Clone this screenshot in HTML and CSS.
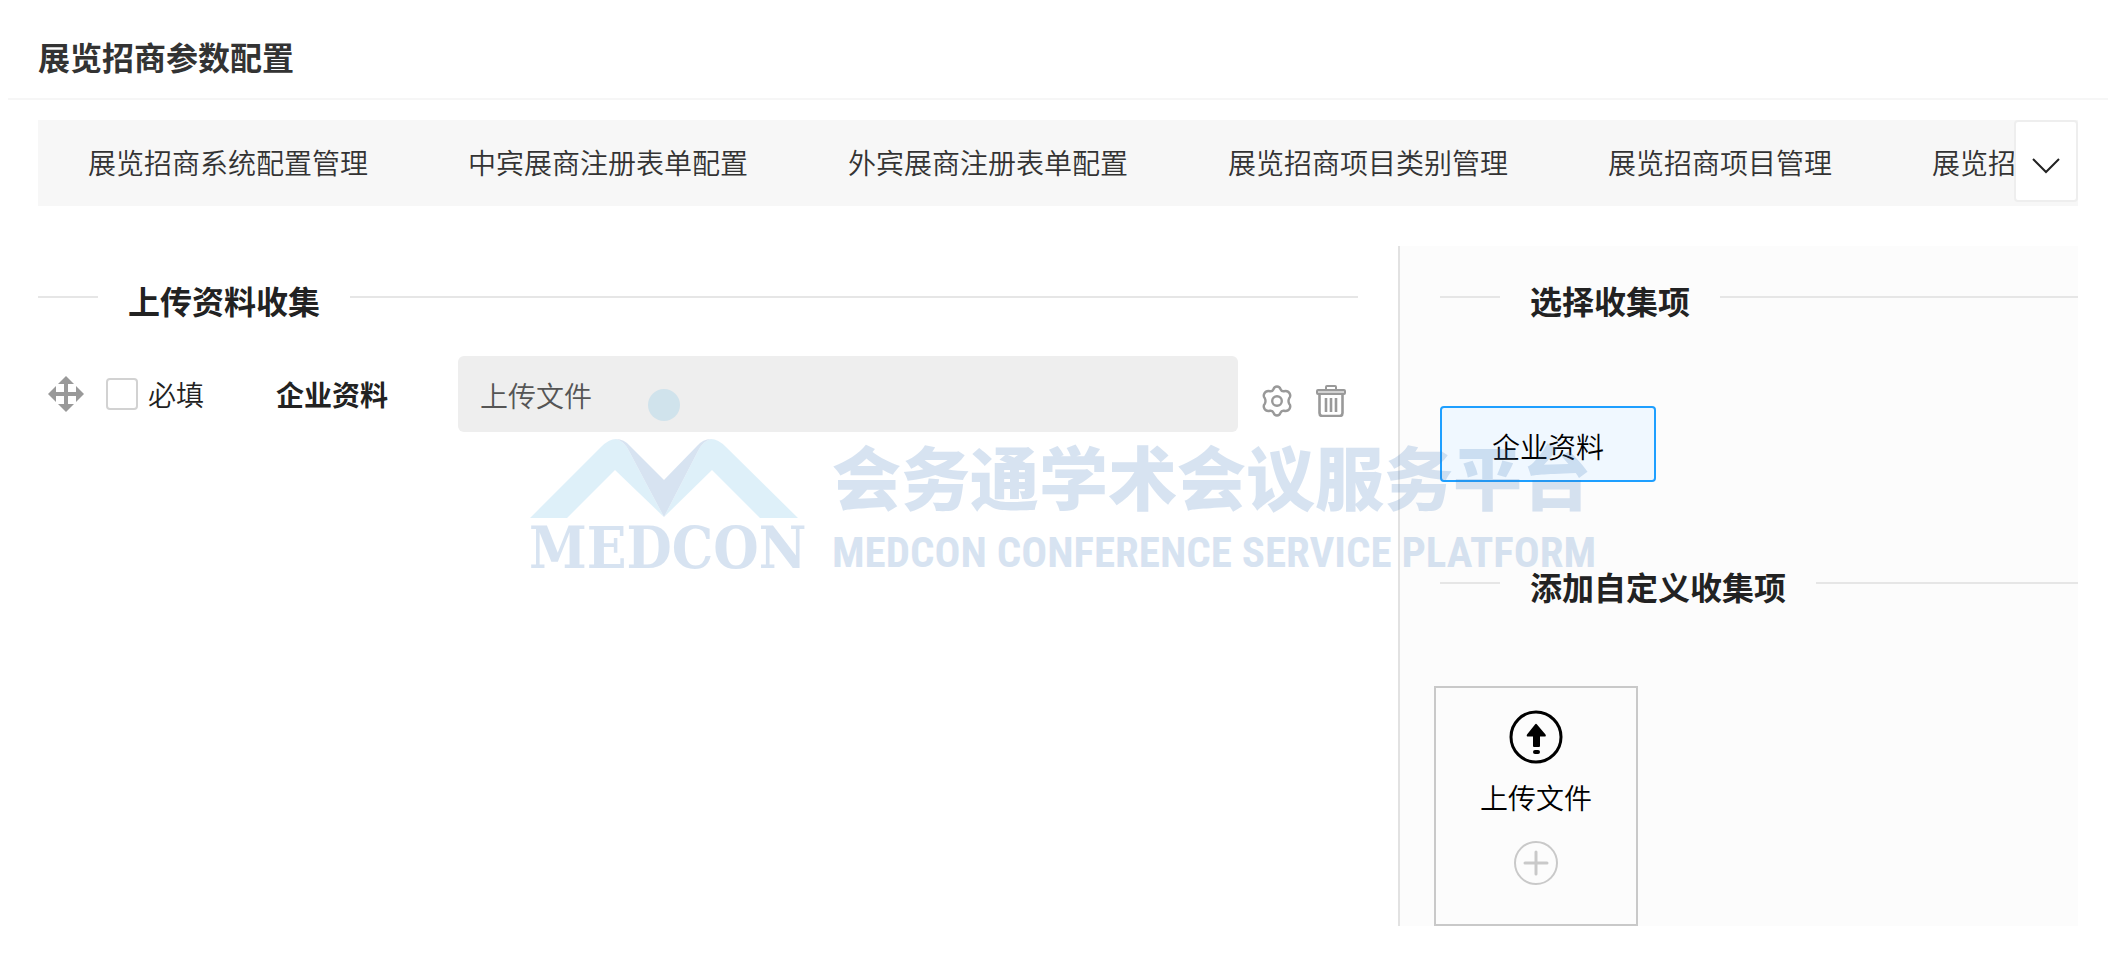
FILE: index.html
```html
<!DOCTYPE html>
<html lang="zh-CN">
<head>
    <meta charset="UTF-8">
    <meta name="viewport" content="width=device-width, initial-scale=1.0">
    <title>展览招商参数配置</title>
    <link rel="stylesheet" href="styles.css">
</head>
<body>
    <header class="page-header">
        <h1>展览招商参数配置</h1>
    </header>

    <nav class="tabs">
        <ul class="tab-list">
            <li><a href="#system">展览招商系统配置管理</a></li>
            <li><a href="#domestic">中宾展商注册表单配置</a></li>
            <li><a href="#foreign">外宾展商注册表单配置</a></li>
            <li><a href="#category">展览招商项目类别管理</a></li>
            <li><a href="#project">展览招商项目管理</a></li>
            <li><a href="#collect">展览招商资料收集</a></li>
        </ul>
        <button type="button" class="tab-more" aria-label="更多">
            <svg width="30" height="18" viewBox="0 0 30 18"><path d="M2 2l13 13L28 2" fill="none" stroke="#222" stroke-width="2"/></svg>
        </button>
    </nav>

    <main class="content">
        <section class="form-panel">
            <h2 class="field-title">上传资料收集</h2>
            <div class="form-row">
                <svg class="move-icon" width="36" height="36" viewBox="0 0 36 36" fill="#999">
                    <path d="M18 0l8 8h-6v8h8v-6l8 8-8 8v-6h-8v8h6l-8 8-8-8h6v-8H8v6l-8-8 8-8v6h8V8h-6z"/>
                </svg>
                <label class="required"><input type="checkbox">必填</label>
                <label class="item-label" for="companyFile">企业资料</label>
                <input type="text" id="companyFile" class="item-input" value="上传文件" readonly>
                <div class="actions">
                    <button type="button" aria-label="设置">
                        <svg width="30" height="32" viewBox="0 0 30 32" fill="none" stroke="#999" stroke-width="2.4">
                            <path d="M11.5 4.2Q12.2 1.5 15 1.5T18.5 4.2Q19.5 6.6 22 6.2Q26 5.4 27.6 8.4Q29 11.2 27.4 12.8Q25.600 16 27.400 19.200Q29 20.800 27.600 23.600Q26 26.600 22 25.800Q19.500 25.400 18.500 27.800Q17.800 30.500 15 30.500T11.500 27.800Q10.500 25.400 8 25.800Q4 26.600 2.400 23.600Q1 20.800 2.600 19.200Q4.400 16 2.600 12.800Q1 11.200 2.400 8.400Q4 5.400 8 6.200Q10.500 6.600 11.500 4.200Z"/>
                            <circle cx="15" cy="16" r="4.800"/>
                        </svg>
                    </button>
                    <button type="button" aria-label="删除">
                        <svg width="30" height="32" viewBox="0 0 30 32" fill="none" stroke="#999" stroke-width="2">
                            <path d="M10 5V2q0-1 1-1h8q1 0 1 1v3"/>
                            <rect x="1" y="5" width="28" height="4" rx="1" fill="#d2d2d2"/>
                            <path d="M3.500 9v19q0 3 3 3h17q3 0 3-3V9" stroke-width="2.600"/>
                            <path d="M10 13v14M15 13v14M20 13v14" stroke-width="2.600"/>
                        </svg>
                    </button>
                </div>
            </div>
        </section>

        <aside class="side-panel">
            <h2 class="field-title">选择收集项</h2>
            <button type="button" class="option">企业资料</button>
            <h2 class="field-title">添加自定义收集项</h2>
            <button type="button" class="add-card">
                <svg width="54" height="54" viewBox="0 0 54 54">
                    <circle cx="27" cy="27" r="25" fill="none" stroke="#000" stroke-width="3"/>
                    <path d="M26 14.500q1-1.500 2 0l8.500 10q1 2-1 2H31V36q0 1-1 1h-5q-1 0-1-1v-9.500h-5q-2 0-1-2z"/>
                    <rect x="24" y="40" width="7" height="4" rx="2"/>
                </svg>
                <span>上传文件</span>
                <svg width="44" height="44" viewBox="0 0 44 44" fill="none" stroke="#c9c9c9" stroke-linecap="round">
                    <circle cx="22" cy="22" r="21" stroke-width="2"/>
                    <path d="M22 11v22M11 22h22" stroke-width="3"/>
                </svg>
            </button>
        </aside>
    </main>

    <!-- watermark -->
    <svg class="watermark" width="1058" height="180" viewBox="0 0 1058 180" overflow="visible">
        <g class="mark-light">
            <circle cx="135" cy="16" r="16"/>
            <path d="M1 129L72 58Q80 50 87 50Q95 52 100 62L135 128L86 81L38 129Z"/>
            <path d="M269 129L197 58Q189 50 182 50Q174 52 169 62L135 128L183 81L231 129Z"/>
        </g>
        <g class="mark-dark">
            <path d="M87 50Q95 50 101 57L135 91L168 57Q174 50 182 50Q174 52 169 62L135 128L100 62Q95 52 87 50Z"/>
            <text class="mark-brand" x="0" y="179">MEDCON</text>
            <text class="mark-cn" x="303" y="116">会务通学术会议服务平台</text>
            <text class="mark-en" x="303" y="178">MEDCON CONFERENCE SERVICE PLATFORM</text>
        </g>
    </svg>
</body>
</html>
```

FILE: styles.css
```css
* {
    box-sizing: border-box;
}
body {
    margin: 0;
    background: #fff;
    color: #222;
    font-family: "Noto Sans CJK SC", sans-serif;
    font-size: 28px;
    font-weight: 350;
    line-height: 40px;
}
button, input {
    font: inherit;
    color: inherit;
}
button {
    padding: 0;
    border: none;
    background: none;
    cursor: pointer;
}
svg {
    display: block;
    flex: none;
}
.page-header {
    margin: 0 8px;
    padding: 32px 30px 18px;
    border-bottom: 2px solid #f6f6f6;
}
h1, h2 {
    margin: 0;
    font-size: 32px;
    font-weight: bold;
}
h1 {
    color: #333;
    line-height: 48px;
}
.tabs {
    display: flex;
    align-items: flex-start;
    height: 86px;
    margin: 20px 38px 40px;
    background: #f7f7f7;
}
.tab-list {
    display: flex;
    flex: 1;
    margin: 0;
    padding: 0;
    overflow: hidden;
    list-style: none;
}
.tab-list a {
    display: block;
    padding: 0 50px;
    color: #333;
    line-height: 84px;
    white-space: nowrap;
    text-decoration: none;
}
.tab-more {
    display: flex;
    align-items: center;
    justify-content: center;
    width: 64px;
    height: 82px;
    padding-top: 10px;
    border: 2px solid #eee;
    border-radius: 4px;
    background: #fff;
}
.content {
    display: grid;
    grid-template-columns: 2fr 1fr;
    margin: 0 38px;
}
.form-panel {
    padding: 26px 40px 0 0;
}
.side-panel {
    padding: 26px 0 0 34px;
    border-left: 2px solid #e2e2e2;
    background: #fcfcfc;
}
.field-title {
    display: flex;
    align-items: center;
    gap: 30px;
    padding: 8px 0 2px;
}
.field-title::before, .field-title::after {
    content: "";
    height: 2px;
    margin-top: -6px;
    background: #e6e6e6;
}
.field-title::before {
    width: 60px;
}
.field-title::after {
    flex: 1;
}
.side-panel .field-title {
    margin-left: 6px;
}
.form-row {
    display: flex;
    align-items: center;
    height: 76px;
    margin-top: 34px;
    padding: 0 12px 0 10px;
}
.required {
    display: flex;
    align-items: center;
    gap: 10px;
    margin: 0 72px 0 22px;
}
.required input {
    appearance: none;
    width: 32px;
    height: 32px;
    margin: 0;
    border: 2px solid #d2d2d2;
    border-radius: 4px;
    background: #fff;
}
.item-label {
    margin-right: 70px;
    font-weight: bold;
}
.item-input {
    flex: 1;
    min-width: 0;
    height: 76px;
    padding: 2px 22px 0;
    border: none;
    border-radius: 6px;
    background: #eee;
    color: #555;
}
.actions {
    display: flex;
    gap: 24px;
    margin-left: 24px;
    padding-top: 14px;
}
.option {
    display: block;
    width: 216px;
    height: 76px;
    margin: 84px 0 76px 6px;
    padding-top: 4px;
    border: 2px solid #1e9fff;
    border-radius: 4px;
    background: #f0f8ff;
    color: #000;
}
.add-card {
    display: flex;
    flex-direction: column;
    align-items: center;
    width: 204px;
    height: 240px;
    margin-top: 78px;
    padding-top: 22px;
    border: 2px solid #c9c9c9;
    color: #000;
}
.add-card span {
    margin: 13px 0 24px;
}
.watermark {
    position: absolute;
    top: 50%;
    left: 50%;
    transform: translate(-50%, -50%);
    opacity: 0.2;
    pointer-events: none;
}
.mark-light {
    fill: #5fb9e6;
}
.mark-dark {
    fill: #3c78be;
}
.mark-brand {
    font: bold 58px "DejaVu Serif Condensed", "DejaVu Serif", serif;
}
.mark-cn {
    font: 900 69px "Noto Sans CJK SC", sans-serif;
}
.mark-en {
    font: bold 43px "Roboto Condensed", "Open Sans Condensed", Roboto, sans-serif;
}
```
